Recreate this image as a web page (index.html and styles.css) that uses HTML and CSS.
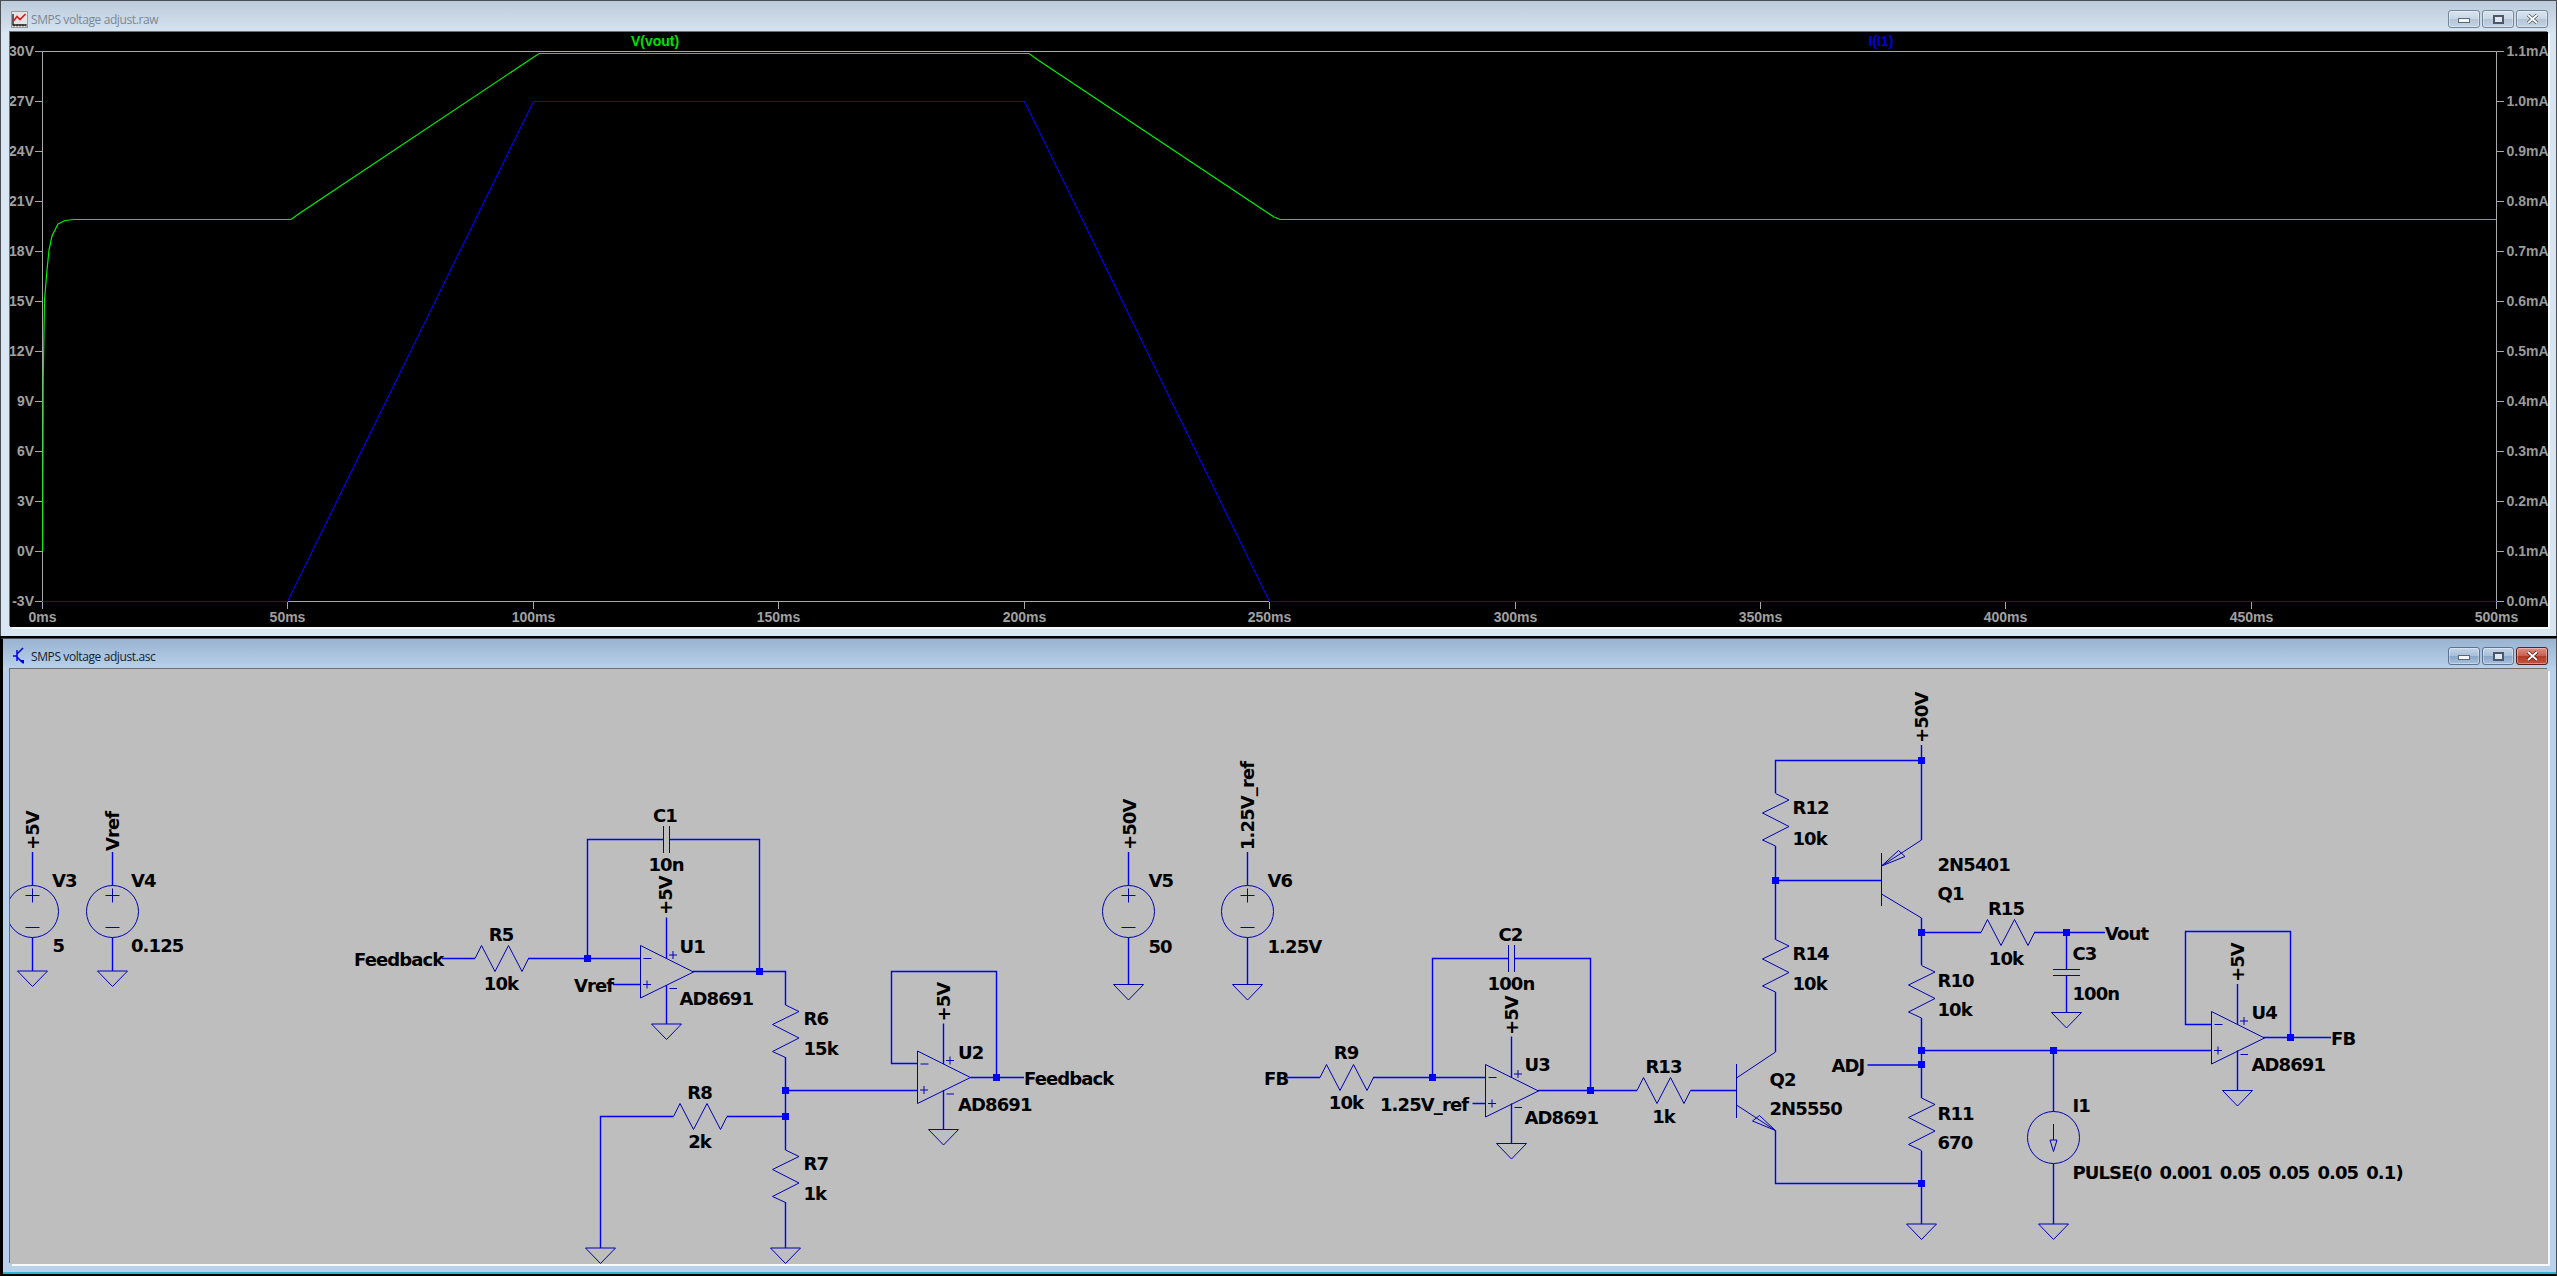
FILE: index.html
```html
<!DOCTYPE html>
<html lang="en">

<head>
    <meta charset="UTF-8">
    <title>LTspice - SMPS voltage adjust</title>
    <link rel="stylesheet" href="styles.css">
</head>

<body>
    <!-- waveform window -->
    <section class="window window-plot">
        <header class="titlebar">
            <svg class="app-icon" width="17" height="17" viewBox="0 0 17 17">
                <rect x="0.5" y="0.5" width="16" height="16" fill="#e4e4e4" stroke="#9a9a9a" />
                <path d="M2 3V14H15" fill="none" stroke="#222" stroke-width="1.4" />
                <path d="M3 15.5V13M6 15.5V13M9 15.5V13M12 15.5V13M15 15.5V13" stroke="#222" />
                <path d="M2.5 10L6 5.5L9 8.5L14.5 3" fill="none" stroke="#e01818" stroke-width="1.6" />
            </svg>
            <span class="title">SMPS voltage adjust.raw</span>
            <div class="controls">
                <button class="ctl"><span class="ico-min"></span></button>
                <button class="ctl"><span class="ico-max"></span></button>
                <button class="ctl">
                    <svg width="13" height="10" viewBox="0 0 13 10"><path d="M2 1L11 9M11 1L2 9" stroke="#4a5565" stroke-width="3.4" /><path d="M2 1L11 9M11 1L2 9" stroke="#fff" stroke-width="1.8" /></svg>
                </button>
            </div>
        </header>
        <div class="client client-plot">
            <svg class="canvas" viewBox="10 32 2538 595" width="2538" height="595">
                <path class="axis" d="M42.5 51.5H2496.5V601.5H42.5Z" />
                <path class="axis" d="M35 51.5H42.5M35 101.5H42.5M35 151.5H42.5M35 201.5H42.5M35 251.5H42.5M35 301.5H42.5M35 351.5H42.5M35 401.5H42.5M35 451.5H42.5M35 501.5H42.5M35 551.5H42.5M35 601.5H42.5" />
                <path class="axis" d="M2496.5 51.5H2504M2496.5 101.5H2504M2496.5 151.5H2504M2496.5 201.5H2504M2496.5 251.5H2504M2496.5 301.5H2504M2496.5 351.5H2504M2496.5 401.5H2504M2496.5 451.5H2504M2496.5 501.5H2504M2496.5 551.5H2504M2496.5 601.5H2504" />
                <path class="axis" d="M42.5 601.5V609M287.5 601.5V609M533.5 601.5V609M778.5 601.5V609M1024.5 601.5V609M1269.5 601.5V609M1515.5 601.5V609M1760.5 601.5V609M2005.5 601.5V609M2251.5 601.5V609M2496.5 601.5V609" />

                <g class="ylabel">
                    <text x="34" y="56">30V</text>
                    <text x="34" y="106">27V</text>
                    <text x="34" y="156">24V</text>
                    <text x="34" y="206">21V</text>
                    <text x="34" y="256">18V</text>
                    <text x="34" y="306">15V</text>
                    <text x="34" y="356">12V</text>
                    <text x="34" y="406">9V</text>
                    <text x="34" y="456">6V</text>
                    <text x="34" y="506">3V</text>
                    <text x="34" y="556">0V</text>
                    <text x="34" y="606">-3V</text>
                </g>
                <g class="rlabel">
                    <text x="2506.5" y="56">1.1mA</text>
                    <text x="2506.5" y="106">1.0mA</text>
                    <text x="2506.5" y="156">0.9mA</text>
                    <text x="2506.5" y="206">0.8mA</text>
                    <text x="2506.5" y="256">0.7mA</text>
                    <text x="2506.5" y="306">0.6mA</text>
                    <text x="2506.5" y="356">0.5mA</text>
                    <text x="2506.5" y="406">0.4mA</text>
                    <text x="2506.5" y="456">0.3mA</text>
                    <text x="2506.5" y="506">0.2mA</text>
                    <text x="2506.5" y="556">0.1mA</text>
                    <text x="2506.5" y="606">0.0mA</text>
                </g>
                <g class="xlabel">
                    <text x="42.5" y="622">0ms</text>
                    <text x="287.5" y="622">50ms</text>
                    <text x="533.5" y="622">100ms</text>
                    <text x="778.5" y="622">150ms</text>
                    <text x="1024.5" y="622">200ms</text>
                    <text x="1269.5" y="622">250ms</text>
                    <text x="1515.5" y="622">300ms</text>
                    <text x="1760.5" y="622">350ms</text>
                    <text x="2005.5" y="622">400ms</text>
                    <text x="2251.5" y="622">450ms</text>
                    <text x="2496.5" y="622">500ms</text>
                </g>

                <text class="trace-name name-green" x="655" y="46">V(vout)</text>
                <text class="trace-name name-blue" x="1881" y="46">I(I1)</text>

                <path class="trace-blue" d="M42.5 601.5H287.5L533.5 101.5H1024.5L1269.5 601.5H2496.5" />
                <path class="trace-green" d="M42.7 551.5L43.2 380L44.5 300L47 270L49 250L52 236L58 224L65 220.5L74 219.5H291L300 213L539 53.5H1029L1038 60L1274 217L1280 219.5H2496" />
            </svg>
        </div>
    </section>

    <!-- schematic window -->
    <section class="window window-sch">
        <header class="titlebar">
            <svg class="app-icon icon-sch" width="12" height="18" viewBox="0 0 12 18">
                <path d="M0 9H4M4 3V14M4 7L10 1M4 10L10 16" fill="none" stroke="#0000e0" stroke-width="1.5" />
                <path d="M6.5 13L11 17L11 13Z" fill="#0000e0" />
            </svg>
            <span class="title">SMPS voltage adjust.asc</span>
            <div class="controls">
                <button class="ctl"><span class="ico-min"></span></button>
                <button class="ctl"><span class="ico-max"></span></button>
                <button class="ctl ctl-close">
                    <svg width="13" height="10" viewBox="0 0 13 10"><path d="M2 1L11 9M11 1L2 9" stroke="#5a1a14" stroke-width="3.4" /><path d="M2 1L11 9M11 1L2 9" stroke="#fff" stroke-width="1.8" /></svg>
                </button>
            </div>
        </header>
        <div class="client client-sch">
            <svg class="canvas" viewBox="10 669 2538 595" width="2538" height="595">
                <defs>
                    <path id="gnd" d="M-15 0H15L0 15.5Z" />
                    <path id="res-h" d="M0 0L6.5 -13L20 13L33.5 -13L47 13L53.5 0" />
                    <path id="res-v" d="M0 0L13.5 6.5L-13 19.5L13.5 33L-13 46.5L0 52.5" />
                    <g id="vsrc">
                        <circle cx="0" cy="0" r="26" />
                        <path d="M-7 -16H7M0 -23V-9M-7 16H7" />
                    </g>
                    <g id="opamp">
                        <path d="M0 0L53 26.5L0 52.5Z" />
                        <path d="M3 13H11M2.5 39H10.5M6.5 35V43M28.5 9.5H36.5M32.5 5.5V13.5M29 43H36.5" />
                    </g>
                </defs>

                <!-- wires -->
                <g class="wire">
                    <path d="M32.5 852V885.5M32.5 937.5V971M112.5 852V885.5M112.5 937.5V971" />
                    <path d="M442 958.5H475M528 958.5H640.5M587.5 958.5V839.5H663M669.5 839.5H759.5V971.5M693 971.5H785.5V1005M613 984.5H640.5" />
                    <path d="M666.5 917.5V958M666.5 985V1024" />
                    <path d="M785.5 1057V1150M785.5 1202V1248M785.5 1116.5H727M673.5 1116.5H600.5V1248M785.5 1090.5H917.5" />
                    <path d="M917.5 1063.5H891.5V971.5H996.5V1077.5M970.5 1077.5H1024M943.5 1023.5V1064M943.5 1090V1129.5" />
                    <path d="M1128.5 852V885.5M1128.5 937.5V984.5M1247.5 852V885.5M1247.5 937.5V984.5" />
                    <path d="M1287 1077.5H1320M1373 1077.5H1485.5M1432.5 1077.5V958.5H1508M1514.5 958.5H1590.5V1090.5M1538 1090.5H1637M1472.5 1103.5H1485.5" />
                    <path d="M1511.5 1036.5V1077M1511.5 1103.5V1143.5M1690.5 1090.5H1736.5" />
                    <path d="M1921.5 745V840M1921.5 760.5H1775.5V793M1775.5 846V939.5M1775.5 880.5H1881.5M1775.5 992V1052M1775.5 1130.5V1183.5H1921.5" />
                    <path d="M1921.5 918V965M1921.5 1018V1098M1921.5 1151V1224M1921.5 932.5H1981M2034 932.5H2105M1867.5 1065H1921.5M2066.5 932.5V969.5M2066.5 976V1012.5" />
                    <path d="M1921.5 1050.5H2211.5M2053.5 1050.5V1111.5M2053.5 1163.5V1224" />
                    <path d="M2211.5 1024.5H2185.5V931.5H2290.5V1037.5M2263.5 1037.5H2331M2237.5 984V1024.5M2237.5 1050.5V1090.5" />
                </g>

                <!-- junction dots -->
                <g class="dot">
                    <rect x="584" y="955" width="7" height="7" />
                    <rect x="756" y="968" width="7" height="7" />
                    <rect x="782" y="1087" width="7" height="7" />
                    <rect x="782" y="1113" width="7" height="7" />
                    <rect x="993" y="1074" width="7" height="7" />
                    <rect x="1429" y="1074" width="7" height="7" />
                    <rect x="1587" y="1087" width="7" height="7" />
                    <rect x="1918" y="757" width="7" height="7" />
                    <rect x="1772" y="877" width="7" height="7" />
                    <rect x="1918" y="929" width="7" height="7" />
                    <rect x="2063" y="929" width="7" height="7" />
                    <rect x="1918" y="1047" width="7" height="7" />
                    <rect x="1918" y="1061" width="7" height="7" />
                    <rect x="2050" y="1047" width="7" height="7" />
                    <rect x="1918" y="1180" width="7" height="7" />
                    <rect x="2287" y="1034" width="7" height="7" />
                </g>

                <!-- symbols -->
                <g class="sym">
                    <use href="#vsrc" x="32.5" y="911.5" />
                    <use href="#vsrc" x="112.5" y="911.5" />
                    <use href="#vsrc" x="1128.5" y="911.5" />
                    <use href="#vsrc" x="1247.5" y="911.5" />

                    <use href="#gnd" x="32.5" y="971" />
                    <use href="#gnd" x="112.5" y="971" />
                    <use href="#gnd" x="666.5" y="1024" />
                    <use href="#gnd" x="600.5" y="1248" />
                    <use href="#gnd" x="785.5" y="1248" />
                    <use href="#gnd" x="943.5" y="1129.5" />
                    <use href="#gnd" x="1128.5" y="984.5" />
                    <use href="#gnd" x="1247.5" y="984.5" />
                    <use href="#gnd" x="1511.5" y="1143.5" />
                    <use href="#gnd" x="1921.5" y="1224" />
                    <use href="#gnd" x="2053.5" y="1224" />
                    <use href="#gnd" x="2066.5" y="1012.5" />
                    <use href="#gnd" x="2237.5" y="1090.5" />

                    <use href="#opamp" x="640.5" y="945.5" />
                    <use href="#opamp" x="917.5" y="1051" />
                    <use href="#opamp" x="1485.5" y="1064.5" />
                    <use href="#opamp" x="2211.5" y="1011.5" />

                    <use href="#res-h" x="475" y="958.5" />
                    <use href="#res-h" x="673.5" y="1116.5" />
                    <use href="#res-h" x="1320" y="1077.5" />
                    <use href="#res-h" x="1637" y="1090.5" />
                    <use href="#res-h" x="1981" y="932.5" />
                    <use href="#res-v" x="785.5" y="1005" />
                    <use href="#res-v" x="785.5" y="1150" />
                    <use href="#res-v" x="1775.5" y="793.5" />
                    <use href="#res-v" x="1775.5" y="939.5" />
                    <use href="#res-v" x="1921.5" y="965.5" />
                    <use href="#res-v" x="1921.5" y="1098" />

                    <!-- capacitors -->
                    <path d="M663.5 826V853M669.5 826V853M1508.5 945V972M1514.5 945V972M2053 969.5H2080M2053 975.5H2080" />

                    <!-- Q1 -->
                    <path d="M1881.5 853V906M1921.5 840L1881.5 866M1881.5 894L1921.5 918" />
                    <path d="M1881.5 866L1905 856.5L1898.5 850.5Z" />
                    <!-- Q2 -->
                    <path d="M1736.5 1064V1118M1775.5 1052L1736.5 1078M1736.5 1105L1775.5 1130.5" />
                    <path d="M1775.5 1130.5L1752.5 1121L1759.5 1115.5Z" />

                    <!-- I1 -->
                    <circle cx="2053.5" cy="1137.5" r="26" />
                    <path d="M2053.5 1124V1140M2050 1140H2057L2053.5 1151.5Z" />
                </g>

                <!-- labels -->
                <g class="lbl">
                    <text x="52" y="886.5">V3</text>
                    <text x="52.5" y="952">5</text>
                    <text x="131" y="886.5">V4</text>
                    <text x="131" y="952">0.125</text>
                    <text x="354" y="966">Feedback</text>
                    <text x="574" y="992">Vref</text>
                    <text x="679.5" y="953">U1</text>
                    <text x="679.5" y="1005">AD8691</text>
                    <text x="803.5" y="1025">R6</text>
                    <text x="803.5" y="1055">15k</text>
                    <text x="803.5" y="1170">R7</text>
                    <text x="803.5" y="1200">1k</text>
                    <text x="958" y="1058.5">U2</text>
                    <text x="958" y="1111">AD8691</text>
                    <text x="1024" y="1084.5">Feedback</text>
                    <text x="1148.5" y="886.5">V5</text>
                    <text x="1148.5" y="952.5">50</text>
                    <text x="1267.5" y="886.5">V6</text>
                    <text x="1267.5" y="952.5">1.25V</text>
                    <text x="1264" y="1084.5">FB</text>
                    <text x="1380" y="1111">1.25V_ref</text>
                    <text x="1524.5" y="1071">U3</text>
                    <text x="1524.5" y="1124">AD8691</text>
                    <text x="1792.5" y="814">R12</text>
                    <text x="1792.5" y="844.5">10k</text>
                    <text x="1792.5" y="960">R14</text>
                    <text x="1792.5" y="990">10k</text>
                    <text x="1769.5" y="1086">Q2</text>
                    <text x="1769.5" y="1115">2N5550</text>
                    <text x="1937.5" y="870.5">2N5401</text>
                    <text x="1937.5" y="900">Q1</text>
                    <text x="1937.5" y="987">R10</text>
                    <text x="1937.5" y="1016">10k</text>
                    <text x="1937.5" y="1119.5">R11</text>
                    <text x="1937.5" y="1148.5">670</text>
                    <text x="1831.5" y="1071.5">ADJ</text>
                    <text x="2105" y="939.5">Vout</text>
                    <text x="2072.5" y="960">C3</text>
                    <text x="2072.5" y="999.5">100n</text>
                    <text x="2072.5" y="1112">I1</text>
                    <text class="pulse" x="2072.5" y="1178.5">PULSE(0 0.001 0.05 0.05 0.05 0.1)</text>
                    <text x="2251.5" y="1019">U4</text>
                    <text x="2251.5" y="1071">AD8691</text>
                    <text x="2331" y="1045">FB</text>
                </g>
                <g class="lbl lbl-mid">
                    <text x="501" y="941">R5</text>
                    <text x="501" y="990">10k</text>
                    <text x="699.5" y="1098.5">R8</text>
                    <text x="699.5" y="1148">2k</text>
                    <text x="665" y="822">C1</text>
                    <text x="666" y="871">10n</text>
                    <text x="1346" y="1059">R9</text>
                    <text x="1346" y="1109">10k</text>
                    <text x="1510.5" y="941">C2</text>
                    <text x="1511" y="990">100n</text>
                    <text x="1663.5" y="1073">R13</text>
                    <text x="1663.5" y="1122.5">1k</text>
                    <text x="2006" y="915">R15</text>
                    <text x="2006" y="964.5">10k</text>
                </g>
                <!-- net labels that stand on a vertical pin -->
                <g class="lbl">
                    <text transform="translate(39 850) rotate(-90)">+5V</text>
                    <text transform="translate(119 851) rotate(-90)">Vref</text>
                    <text transform="translate(672 915) rotate(-90)">+5V</text>
                    <text transform="translate(949.5 1021.5) rotate(-90)">+5V</text>
                    <text transform="translate(1135.5 850) rotate(-90)">+50V</text>
                    <text transform="translate(1254 850) rotate(-90)">1.25V_ref</text>
                    <text transform="translate(1517.5 1035) rotate(-90)">+5V</text>
                    <text transform="translate(1928 743) rotate(-90)">+50V</text>
                    <text transform="translate(2243.5 982) rotate(-90)">+5V</text>
                </g>
            </svg>
        </div>
    </section>
</body>

</html>
```

FILE: styles.css
```css
html,
body {
    margin: 0;
    height: 100%;
    overflow: hidden;
    background-color: #000000;
}

body {
    display: flex;
    flex-direction: column;
    width: 2557px;
    height: 1276px;
}

.window {
    display: flex;
    flex-direction: column;
    flex: none;
    box-sizing: border-box;
    border-style: solid;
    border-color: #4a4f55;
}

.window-plot {
    height: 636px;
    border-width: 1px 1px 0 1px;
    background-color: #d8e5f3;
    padding: 0 8px 9px 9px;
}

.window-sch {
    height: 638px;
    margin-top: 2px;
    border-width: 1px 1px 2px 3px;
    border-left-color: #000000;
    border-bottom-color: #000000;
    background-color: #b9d1ea;
    padding: 0 8px 10px 7px;
    box-shadow: inset 0 -2px 0 #2fb4d8;
}

.titlebar {
    display: flex;
    align-items: center;
    flex: none;
    box-sizing: border-box;
    font-family: "Open Sans", "Noto Sans", sans-serif;
    font-size: 12px;
    letter-spacing: -0.4px;
}

.window-plot .titlebar {
    height: 31px;
    margin: 0 -8px 0 -9px;
    padding: 5px 8px 0 10px;
    background: linear-gradient(#bccbda, #d6e3f1);
    color: #7b8794;
}

.window-sch .titlebar {
    height: 30px;
    margin: 0 -8px 0 -7px;
    padding: 4px 8px 0 10px;
    background: linear-gradient(#99b3d1, #b9d1ea);
    color: #16202c;
}

.app-icon {
    flex: none;
    margin-right: 3px;
}

.icon-sch {
    margin-right: 6px;
}

.title {
    flex: 1;
    white-space: nowrap;
}

.controls {
    display: flex;
    gap: 2px;
}

.ctl {
    display: flex;
    align-items: center;
    justify-content: center;
    width: 32px;
    height: 18px;
    padding: 0;
    border: 1px solid #75869a;
    border-radius: 3px;
    background: linear-gradient(#d9e4f0 0, #c8d6e5 48%, #b4c4d6 52%, #c4d3e3 100%);
    box-shadow: inset 0 0 0 1px rgba(255, 255, 255, 0.35);
}

.window-sch .ctl {
    border-color: #5d7391;
    background: linear-gradient(#c3d4e7 0, #a9c0da 48%, #8ba6c6 52%, #a8c1dd 100%);
}

.window-sch .ctl-close {
    border-color: #5a1e1c;
    background: linear-gradient(#dc8f84 0, #c9604f 48%, #b23a26 52%, #c65440 100%);
}

.ico-min {
    display: block;
    width: 10px;
    height: 3px;
    margin-top: 3px;
    background-color: #f4f6f9;
    border: 1px solid #5a6675;
}

.ico-max {
    display: block;
    box-sizing: border-box;
    width: 11px;
    height: 9px;
    border: 2px solid #4c5868;
    background-color: #dfe6ee;
    box-shadow: inset 0 0 0 1px #dfe6ee;
}

.client {
    box-sizing: border-box;
    flex: none;
    width: 2538px;
    height: 595px;
    box-shadow: -1px -1px 0 #6e6e6e, 2px 2px 0 #f6f9fc;
}

.client-plot {
    background-color: #000000;
}

.client-sch {
    background-color: #bebebe;
}

.canvas {
    display: block;
}

/* waveform */
.axis {
    fill: none;
    stroke: #a8a8a8;
    stroke-width: 1;
}

.ylabel text,
.rlabel text,
.xlabel text {
    font-family: "Liberation Sans", Arial, sans-serif;
    font-size: 14px;
    font-weight: 700;
    fill: #a0a0a0;
}

.ylabel text {
    text-anchor: end;
}

.xlabel text {
    text-anchor: middle;
}

.rlabel text {
    fill: #9a9a9a;
}

.trace-name {
    font-family: "Liberation Sans", Arial, sans-serif;
    font-size: 14px;
    font-weight: 700;
    text-anchor: middle;
}

.name-green {
    fill: #00e000;
}

.name-blue {
    fill: #0000e0;
}

.trace-green {
    fill: none;
    stroke: #00f000;
    stroke-width: 1.2;
}

.trace-blue {
    fill: none;
    stroke: #0000ff;
    stroke-width: 1.1;
}

/* schematic */
.wire {
    fill: none;
    stroke: #0000f0;
    stroke-width: 1.4;
}

.sym {
    fill: none;
    stroke: #0000b4;
    stroke-width: 1;
}

.dot rect {
    fill: #0000ff;
}

.lbl text {
    font-family: "DejaVu Sans", Verdana, sans-serif;
    font-size: 18px;
    font-weight: 700;
    letter-spacing: -0.9px;
    fill: #000000;
}

.lbl .pulse {
    word-spacing: 2.6px;
}

.lbl-mid text {
    text-anchor: middle;
}
```
